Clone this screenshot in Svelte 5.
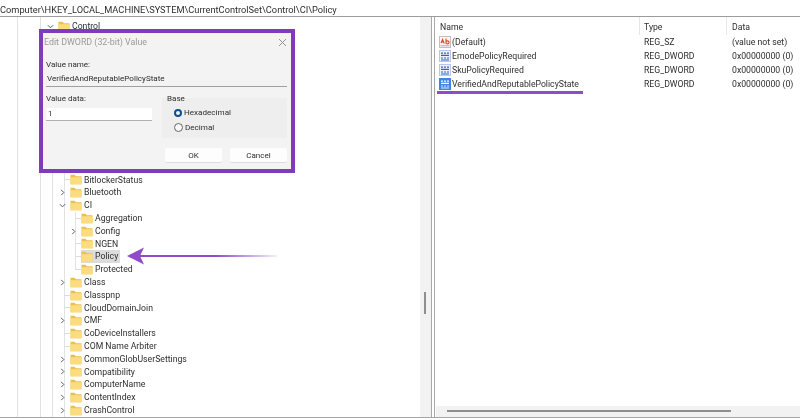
<script>
	const rows = [
		{ name: 'BitlockerStatus', level: 2 },
		{ name: 'Bluetooth', level: 2, closed: true },
		{ name: 'CI', level: 2, open: true },
		{ name: 'Aggregation', level: 3 },
		{ name: 'Config', level: 3, closed: true },
		{ name: 'NGEN', level: 3 },
		{ name: 'Policy', level: 3, selected: true },
		{ name: 'Protected', level: 3 },
		{ name: 'Class', level: 2, closed: true },
		{ name: 'Classpnp', level: 2 },
		{ name: 'CloudDomainJoin', level: 2 },
		{ name: 'CMF', level: 2, closed: true },
		{ name: 'CoDeviceInstallers', level: 2 },
		{ name: 'COM Name Arbiter', level: 2 },
		{ name: 'CommonGlobUserSettings', level: 2, closed: true },
		{ name: 'Compatibility', level: 2, closed: true },
		{ name: 'ComputerName', level: 2, closed: true },
		{ name: 'ContentIndex', level: 2, closed: true },
		{ name: 'CrashControl', level: 2, closed: true }
	];

	const values = [
		{ name: '(Default)', type: 'REG_SZ', data: '(value not set)', str: true },
		{ name: 'EmodePolicyRequired', type: 'REG_DWORD', data: '0x00000000 (0)' },
		{ name: 'SkuPolicyRequired', type: 'REG_DWORD', data: '0x00000000 (0)' },
		{ name: 'VerifiedAndReputablePolicyState', type: 'REG_DWORD', data: '0x00000000 (0)', mark: true }
	];

	const indent = { 1: 58, 2: 70, 3: 81 };
</script>

{#snippet folderRow(row)}
	<div class="row" style="padding-left:{indent[row.level]}px">
		{#if row.open}
			<svg class="chev" viewBox="0 0 8 8"><path d="M1 2.5 4 5.5 7 2.5" /></svg>
		{:else if row.closed}
			<svg class="chev" viewBox="0 0 8 8"><path d="M2.5 1 5.5 4 2.5 7" /></svg>
		{:else}
			<span class="tick"></span>
		{/if}
		<div class="item" class:selected={row.selected}>
			<svg class="folder" viewBox="0 0 12 11">
				<path d="M0.5 0.8h4l1.4 1.5h5.6v8h-11z" fill="#efbf4e" />
				<path d="M0.5 3.2h11v7.1h-11z" fill="#fbdc7e" />
			</svg>
			<span>{row.name}</span>
		</div>
	</div>
{/snippet}

<div class="window">
	<div class="address">Computer\HKEY_LOCAL_MACHINE\SYSTEM\CurrentControlSet\Control\CI\Policy</div>

	<div class="panes">
		<div class="tree-pane">
			<div class="tree">
				<span class="guide" style="left:17px;top:0;bottom:0"></span>
				<span class="guide" style="left:40px;top:0;bottom:0"></span>
				<span class="guide" style="left:52px;top:14px;bottom:0"></span>
				<span class="guide" style="left:64px;top:150px;bottom:0"></span>
				<span class="guide" style="left:75px;top:194px;height:59px"></span>
				{@render folderRow({ name: 'Control', level: 1, open: true })}
				<div class="covered"></div>
				{#each rows as row}
					{@render folderRow(row)}
				{/each}
			</div>
			<div class="vscroll"><span class="vthumb"></span></div>
		</div>

		<div class="splitter"></div>

		<div class="list-pane">
			<div class="list">
				<div class="cols head">
					<span>Name</span>
					<span>Type</span>
					<span>Data</span>
				</div>
				{#each values as v}
					<div class="cols">
						<span class="name" class:mark={v.mark}>
							{#if v.str}
								<svg class="val" viewBox="0 0 12 12">
									<rect x="0.5" y="0.5" width="11" height="11" fill="#fdf6f2" stroke="#c9bdb8" />
									<path d="M2 7 3.6 3.5 5.2 7.5M2.6 6h2M7 2.5V7.5M7 6.4a1.5 1.5 0 1 0 3 0 1.5 1.5 0 1 0-3 0" fill="none" stroke="#d9482c" stroke-width="1.1" />
									<path d="M1.5 9.8h9" stroke="#a9a9c8" />
								</svg>
							{:else}
								<svg class="val" viewBox="0 0 12 12">
									<rect x="0.5" y="0.5" width="11" height="11" fill={v.mark ? '#3f86e0' : '#eef3fb'} stroke={v.mark ? '#3f86e0' : '#b8c8e4'} />
									<path d="M2 3.2h2M5 3.2h2M8 3.2h2M2 5.4h8" stroke={v.mark ? '#fff' : '#3563b8'} stroke-width="1.3" />
									<path d="M2 8h2M5 8h2M8 8h2M2 10h8" stroke={v.mark ? '#dce8fa' : '#2f5fb8'} stroke-width="1.2" />
								</svg>
							{/if}
							{v.name}
						</span>
						<span>{v.type}</span>
						<span>{v.data}</span>
					</div>
				{/each}
			</div>
			<div class="hscroll"><span class="hthumb"></span></div>
		</div>
	</div>

	<div class="dialog">
		<div class="title">
			<span>Edit DWORD (32-bit) Value</span>
			<svg class="close" viewBox="0 0 9 9"><path d="M1 1 8 8M8 1 1 8" /></svg>
		</div>
		<div class="label">Value name:</div>
		<div class="name-input">VerifiedAndReputablePolicyState</div>
		<div class="fields">
			<div class="data-col">
				<div class="label">Value data:</div>
				<div class="data-input">1</div>
			</div>
			<div class="base">
				<div class="base-label">Base</div>
				<div class="radio"><span class="dot on"></span>Hexadecimal</div>
				<div class="radio"><span class="dot"></span>Decimal</div>
			</div>
		</div>
		<div class="buttons">
			<span class="btn">OK</span>
			<span class="btn">Cancel</span>
		</div>
	</div>

	<svg class="arrow" viewBox="0 0 160 24">
		<defs>
			<linearGradient id="fade" x1="0" x2="1" y1="0" y2="0">
				<stop offset="0" stop-color="#8f4bc8" />
				<stop offset="0.55" stop-color="#8f4bc8" />
				<stop offset="1" stop-color="#8f4bc8" stop-opacity="0.1" />
			</linearGradient>
		</defs>
		<path d="M14 11H152V13H14z" fill="url(#fade)" />
		<path d="M2 12 19 3.5 15 12 19 20.5z" fill="#8f4bc8" />
	</svg>
</div>

<style>
	:global(body) {
		margin: 0;
		background: #fff;
	}
	.window {
		position: relative;
		width: 800px;
		height: 420px;
		overflow: hidden;
		display: flex;
		flex-direction: column;
		background: #fff;
		color: #2e2e2e;
		font: 8.7px/12.8px Roboto, sans-serif;
		filter: blur(0.35px);
	}
	.address {
		height: 16px;
		line-height: 20px;
		flex: none;
		font-size: 9.25px;
		white-space: nowrap;
		border-bottom: 1px solid #9c9c9c;
	}
	.panes {
		display: flex;
		height: 400px;
		flex: none;
		border-bottom: 1px solid #a5a5a5;
	}
	.tree-pane {
		width: 432px;
		flex: none;
		display: flex;
		border-right: 1px solid #a8a8a8;
		box-sizing: border-box;
	}
	.tree {
		position: relative;
		flex: 1;
		padding-top: 3px;
		overflow: hidden;
	}
	.guide {
		position: absolute;
		width: 1px;
		background: #e2e2e2;
	}
	.row {
		position: relative;
		height: 12.8px;
		display: flex;
		align-items: center;
	}
	.covered {
		height: 140.8px;
	}
	.chev {
		position: absolute;
		width: 7px;
		height: 7px;
		margin-left: -11px;
		fill: none;
		stroke: #555;
		stroke-width: 1.1;
	}
	.tick {
		position: absolute;
		width: 6px;
		height: 1px;
		margin-left: -6px;
		background: #dcdcdc;
	}
	.item {
		display: flex;
		align-items: center;
		gap: 2px;
		height: 12.8px;
		padding-right: 2px;
		background: #fff;
	}
	.item.selected {
		background: #dcdcdc;
	}
	.folder {
		width: 12px;
		height: 11px;
		flex: none;
	}
	.vscroll {
		width: 11px;
		background: #f2f2f2;
		position: relative;
	}
	.vthumb {
		position: absolute;
		left: 4px;
		top: 275px;
		width: 2px;
		height: 22px;
		background: #8f8f8f;
	}
	.splitter {
		width: 2px;
		flex: none;
	}
	.list-pane {
		flex: 1;
		display: flex;
		flex-direction: column;
		border-left: 1px solid #a8a8a8;
	}
	.list {
		flex: 1;
		padding-top: 3px;
	}
	.cols {
		display: grid;
		grid-template-columns: 204px 88px 1fr;
		padding-left: 5px;
		height: 14px;
		line-height: 14px;
		position: relative;
	}
	.cols.head {
		height: 15px;
	}
	.cols.head::before,
	.cols.head::after {
		content: '';
		position: absolute;
		top: -3px;
		bottom: 0;
		width: 1px;
		background: #e6e6e6;
	}
	.cols.head::before {
		left: 204px;
	}
	.cols.head::after {
		left: 291px;
	}
	.name {
		display: flex;
		align-items: center;
		gap: 1px;
		margin-left: -1px;
		position: relative;
		white-space: nowrap;
	}
	.name.mark::after {
		content: '';
		position: absolute;
		left: -2px;
		width: 146px;
		top: 14px;
		height: 3px;
		background: #8f4bc8;
	}
	.val {
		width: 12px;
		height: 12px;
		flex: none;
	}
	.hscroll {
		height: 11px;
		background: #f2f2f2;
		position: relative;
		margin-left: 1px;
	}
	.hthumb {
		position: absolute;
		left: 11px;
		top: 4px;
		height: 2px;
		width: 284px;
		background: #8f8f8f;
	}
	.dialog {
		position: absolute;
		left: 39px;
		top: 29px;
		width: 256px;
		height: 144px;
		box-sizing: border-box;
		border: 4px solid #7f3bb8;
		background: #f3f3f3;
		padding: 0 3px;
		font-size: 8.05px;
	}
	.title {
		display: flex;
		justify-content: space-between;
		align-items: center;
		height: 18px;
		margin: 0 0 8px -2px;
		color: #9a9a9a;
		font-size: 8.85px;
	}
	.close {
		width: 9px;
		height: 9px;
		margin-right: 1px;
		fill: none;
		stroke: #888;
		stroke-width: 0.9;
	}
	.label {
		height: 12px;
	}
	.name-input {
		height: 14px;
		line-height: 14px;
		margin-right: 1px;
		padding-left: 1px;
		margin-top: 1px;
		border-bottom: 1px solid #a0a0a0;
	}
	.fields {
		display: flex;
		gap: 10px;
		margin-top: 6px;
	}
	.data-col {
		width: 106px;
		flex: none;
	}
	.data-input {
		height: 12px;
		line-height: 12px;
		margin-top: 3px;
		padding-left: 2px;
		background: #fff;
		border-bottom: 1px solid #b0b0b0;
	}
	.base {
		flex: 1;
		height: 45px;
		margin-right: 1px;
		padding-left: 5px;
		background: linear-gradient(transparent 5px, #eeeeee 5px);
		box-sizing: border-box;
	}
	.base-label {
		height: 12px;
	}
	.radio {
		display: flex;
		align-items: center;
		gap: 2px;
		height: 15px;
		padding-left: 7px;
		font-size: 8.1px;
	}
	.dot {
		width: 7px;
		height: 7px;
		border: 1px solid #666;
		border-radius: 50%;
		background: #f8f8f8;
	}
	.dot.on {
		width: 4px;
		height: 4px;
		border: 2.5px solid #0f4f8f;
		background: #f3f3f3;
	}
	.buttons {
		display: flex;
		justify-content: flex-end;
		gap: 8px;
		margin-top: 10px;
		margin-right: 1px;
	}
	.btn {
		width: 57px;
		height: 14px;
		line-height: 15px;
		text-align: center;
		background: #fdfdfd;
		border-radius: 2px;
		border-bottom: 1px solid #ddd;
	}
	.arrow {
		position: absolute;
		left: 125px;
		top: 244px;
		width: 160px;
		height: 24px;
	}
</style>
